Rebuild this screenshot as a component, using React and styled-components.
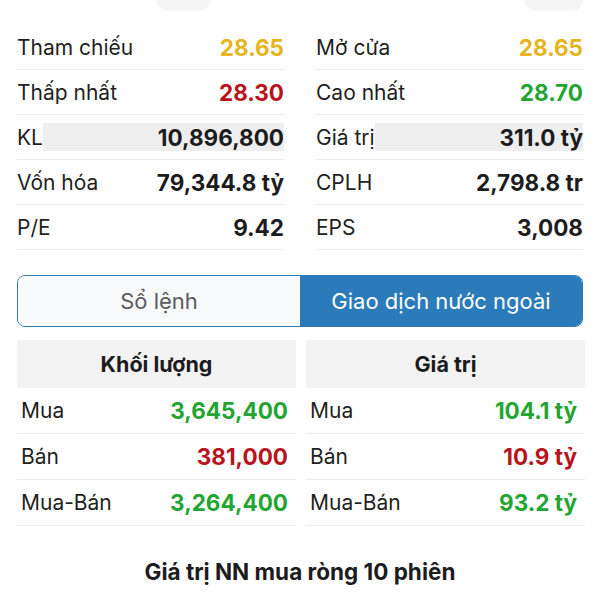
import React from "react"
import styled, { createGlobalStyle } from "styled-components"

const GlobalStyle = createGlobalStyle`
  body {
    margin: 0;
    background: #ffffff;
    font-family: Inter, "Liberation Sans", Arial, sans-serif;
    color: #1c1c1e;
  }
`

const stats = [
  [
    { label: "Tham chiếu", value: "28.65", tone: "ref" },
    { label: "Mở cửa", value: "28.65", tone: "ref" },
  ],
  [
    { label: "Thấp nhất", value: "28.30", tone: "down" },
    { label: "Cao nhất", value: "28.70", tone: "up" },
  ],
  [
    { label: "KL", value: "10,896,800", shade: true },
    { label: "Giá trị", value: "311.0 tỷ", shade: true },
  ],
  [
    { label: "Vốn hóa", value: "79,344.8 tỷ" },
    { label: "CPLH", value: "2,798.8 tr" },
  ],
  [
    { label: "P/E", value: "9.42" },
    { label: "EPS", value: "3,008" },
  ],
]

const foreign = [
  {
    title: "Khối lượng",
    rows: [
      { label: "Mua", value: "3,645,400", tone: "up" },
      { label: "Bán", value: "381,000", tone: "down" },
      { label: "Mua-Bán", value: "3,264,400", tone: "up" },
    ],
  },
  {
    title: "Giá trị",
    rows: [
      { label: "Mua", value: "104.1 tỷ", tone: "up" },
      { label: "Bán", value: "10.9 tỷ", tone: "down" },
      { label: "Mua-Bán", value: "93.2 tỷ", tone: "up" },
    ],
  },
]

const tones = {
  ref: "#e4b51c",
  down: "#b8141c",
  up: "#22a532",
}

const App = () => {
  return (
    <Page>
      <GlobalStyle />
      <TopBar>
        <Pill $left={140} $width={53} />
        <Pill $left={315} $width={58} />
      </TopBar>

      <StatsGrid>
        {stats.map((pair, i) =>
          pair.map((s) => (
            <StatRow key={s.label + i}>
              <StatLabel>{s.label}</StatLabel>
              <StatValue $tone={s.tone} $shade={s.shade}>
                {s.value}
              </StatValue>
            </StatRow>
          ))
        )}
      </StatsGrid>

      <Tabs>
        <Tab>Sổ lệnh</Tab>
        <Tab $active>Giao dịch nước ngoài</Tab>
      </Tabs>

      <Tables>
        {foreign.map((t, i) => (
          <Table key={t.title} $right={i === 1}>
            <TableHead>{t.title}</TableHead>
            {t.rows.map((r) => (
              <TableRow key={r.label}>
                <StatLabel>{r.label}</StatLabel>
                <CellValue $tone={r.tone}>{r.value}</CellValue>
              </TableRow>
            ))}
          </Table>
        ))}
      </Tables>

      <SectionTitle>Giá trị NN mua ròng 10 phiên</SectionTitle>
    </Page>
  )
}

export default App

const Page = styled.div`
  width: 600px;
  box-sizing: border-box;
  padding: 0 17px;
`

const TopBar = styled.div`
  display: flex;
  height: 10px;
  margin-bottom: 15px;
`

const Pill = styled.div`
  margin-left: ${(p) => p.$left}px;
  width: ${(p) => p.$width}px;
  height: 9px;
  background: #f5f5f5;
  border-radius: 0 0 12px 12px;
  box-shadow: 0 1px 2px rgba(0, 0, 0, 0.06);
`

const StatsGrid = styled.div`
  display: grid;
  grid-template-columns: 1fr 1fr;
  column-gap: 32px;
`

const StatRow = styled.div`
  display: flex;
  align-items: center;
  height: 44px;
  border-bottom: 1px solid #ececec;
  font-size: 21px;
`

const StatLabel = styled.span`
  flex: none;
  font-weight: 400;
  color: #1f1f21;
`

const StatValue = styled.span`
  flex: 1;
  display: flex;
  align-items: center;
  justify-content: flex-end;
  align-self: center;
  height: 28px;
  font-size: 22.5px;
  font-weight: 700;
  color: ${(p) => (p.$tone ? tones[p.$tone] : "#1c1c1e")};
  background: ${(p) => (p.$shade ? "#eeeeee" : "transparent")};
`

const Tabs = styled.div`
  display: grid;
  grid-template-columns: 1fr 1fr;
  margin-top: 25px;
  height: 52px;
  border: 1.5px solid #2f7ab4;
  border-radius: 8px;
  overflow: hidden;
  box-sizing: border-box;
`

const Tab = styled.div`
  display: flex;
  align-items: center;
  justify-content: center;
  font-size: 22px;
  background: ${(p) => (p.$active ? "#2b7bba" : "#f8fafb")};
  color: ${(p) => (p.$active ? "#ffffff" : "#5a5a5e")};
`

const Tables = styled.div`
  display: grid;
  grid-template-columns: 279px 1fr;
  column-gap: 9px;
  margin-top: 13px;
`

const Table = styled.div`
  display: flex;
  flex-direction: column;
  padding-left: ${(p) => (p.$right ? "5px" : "4px")};
  padding-right: ${(p) => (p.$right ? "6px" : "8px")};
`

const TableHead = styled.div`
  display: flex;
  align-items: center;
  justify-content: center;
  height: 48px;
  margin: 0 -8px 0 -4px;
  background: #f3f3f3;
  font-size: 21.5px;
  font-weight: 700;
`

const TableRow = styled.div`
  display: flex;
  align-items: center;
  height: 45px;
  margin: 0 -8px 0 -4px;
  padding: 0 8px 0 4px;
  border-bottom: 1px solid #ececec;
  font-size: 21px;
`

const CellValue = styled.span`
  flex: 1;
  text-align: right;
  font-size: 22.5px;
  font-weight: 700;
  color: ${(p) => tones[p.$tone]};
`

const SectionTitle = styled.h2`
  margin: 32px 0 0;
  text-align: center;
  font-size: 22.5px;
  font-weight: 700;
  color: #1c1c1e;
`
